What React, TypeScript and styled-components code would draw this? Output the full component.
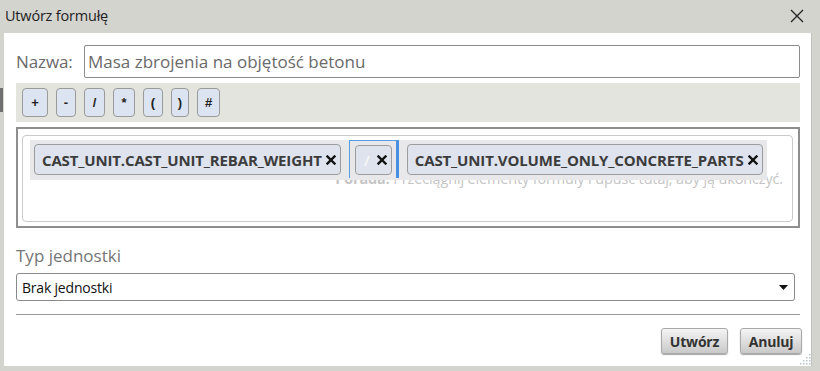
import React from "react";
import styled, { createGlobalStyle } from "styled-components";

const Global = createGlobalStyle`
  html, body { margin: 0; padding: 0; }
  body { background: #d4d4cf; font-family: "Open Sans", "Noto Sans", sans-serif; overflow: hidden; }
`;

const Window = styled.div`
  position: relative;
  width: 820px;
  height: 371px;
  background: #d4d4cf;
  display: flex;
  flex-direction: column;
`;

const TitleBar = styled.div`
  height: 33px;
  display: flex;
  align-items: center;
  justify-content: space-between;
  padding: 0 16px 0 5px;
  box-sizing: border-box;
`;

const Title = styled.span`
  font-size: 14.5px;
  color: #1e1e1e;
  letter-spacing: -0.2px;
  margin-top: -2px;
`;

const CloseIcon = styled.svg`
  width: 14px;
  height: 14px;
  margin-top: -2px;
`;

const SideMark = styled.div`
  position: absolute;
  left: 0;
  top: 88px;
  width: 3px;
  height: 24px;
  background: #6f6f6f;
`;

const Panel = styled.div`
  margin: 0 8px 5px 4px;
  flex: 1;
  background: #fff;
  border-right: 1px solid #c2c2c2;
  padding: 12px 11px 0 12px;
  box-sizing: border-box;
  display: flex;
  flex-direction: column;
  position: relative;
`;

const NameRow = styled.div`
  display: flex;
  align-items: center;
  height: 33px;
`;

const Label = styled.span`
  font-size: 17px;
  color: #6a6a6a;
  width: 68px;
  flex: none;
  letter-spacing: -0.1px;
`;

const NameInput = styled.div`
  flex: 1;
  height: 33px;
  box-sizing: border-box;
  border: 1px solid #8c8c8c;
  border-radius: 2px;
  display: flex;
  align-items: center;
  padding-left: 3px;
  font-size: 17px;
  color: #6a6a6a;
  letter-spacing: 0;
`;

const Toolbar = styled.div`
  margin-top: 5px;
  height: 39px;
  background: #e4e4df;
  display: flex;
  align-items: flex-start;
  padding: 5px 0 0 6px;
  box-sizing: border-box;
  gap: 8px;
`;

const OpButton = styled.div<{ $w: number }>`
  width: ${(p) => p.$w}px;
  height: 29px;
  box-sizing: border-box;
  border: 1px solid #9a9a9a;
  border-radius: 4px;
  background: #dde4f1;
  display: flex;
  align-items: center;
  justify-content: center;
  font-family: "Liberation Sans", Arial, sans-serif;
  font-weight: bold;
  font-size: 13px;
  color: #222;
`;

const DropOuter = styled.div`
  margin-top: 5px;
  height: 101px;
  box-sizing: border-box;
  border: 2px solid #8e8e8e;
  padding: 6px 5px 4px 4px;
`;

const DropInner = styled.div`
  position: relative;
  height: 100%;
  box-sizing: border-box;
  border: 1px solid #cacaca;
  border-radius: 4px;
  padding: 4px 7px;
`;

const Hint = styled.div`
  position: absolute;
  right: 9px;
  top: 33px;
  font-size: 14.4px;
  color: #c4c4c4;
  white-space: nowrap;
  z-index: 0;
  letter-spacing: -0.1px;
`;

const Strip = styled.div`
  position: relative;
  z-index: 1;
  display: inline-flex;
  align-items: flex-start;
  height: 40px;
  box-sizing: border-box;
  background: #e8e8ea;
  padding: 4px 4px 0 4px;
  gap: 8px;
`;

const Token = styled.div`
  height: 31px;
  box-sizing: border-box;
  border: 1px solid #9c9c9c;
  border-radius: 4px;
  background: #dee3ee;
  display: flex;
  align-items: center;
  padding: 0 4px 0 7px;
  gap: 4px;
  font-weight: bold;
  font-size: 15px;
  color: #3c3c3c;
  letter-spacing: -0.15px;
  white-space: nowrap;
`;

const OpToken = styled(Token)`
  padding: 0 4px 0 8px;
  gap: 7px;
  height: 30px;
`;

const Faded = styled.span`
  color: #f4f4f4;
  font-weight: bold;
`;

const Selected = styled.div`
  margin-top: -4px;
  height: 38px;
  box-sizing: border-box;
  border: 1px solid #5b9be0;
  border-right: 3px solid #4a90e2;
  border-bottom: none;
  padding: 4px 4px 0 5px;
  background: #e8e8ea;
`;

const XIcon = styled.svg`
  width: 10px;
  height: 10px;
  flex: none;
`;

const UnitLabel = styled.div`
  margin-top: 17px;
  font-size: 17px;
  color: #757575;
  letter-spacing: 0;
  height: 22px;
  line-height: 22px;
`;

const Select = styled.div`
  margin-top: 6px;
  margin-right: 5px;
  height: 28px;
  box-sizing: border-box;
  border: 1px solid #8a8a8a;
  border-radius: 3px;
  display: flex;
  align-items: center;
  justify-content: space-between;
  padding: 0 6px 0 5px;
  font-size: 14px;
  color: #111;
  letter-spacing: -0.2px;
`;

const Arrow = styled.svg`
  width: 9px;
  height: 5px;
`;

const Divider = styled.div`
  margin-top: 13px;
  height: 1px;
  background: #9a9a9a;
`;

const Footer = styled.div`
  display: flex;
  justify-content: flex-end;
  gap: 12px;
  margin-top: 13px;
  margin-right: -2px;
`;

const ActionButton = styled.div<{ $w: number }>`
  width: ${(p) => p.$w}px;
  height: 26px;
  box-sizing: border-box;
  border: 1px solid #a8a8a8;
  border-radius: 3px;
  background: linear-gradient(#f4f4f4, #c9c9c9);
  box-shadow: 0 1px 1px rgba(0, 0, 0, 0.35);
  display: flex;
  align-items: center;
  justify-content: center;
  font-weight: bold;
  font-size: 14px;
  color: #333;
  letter-spacing: -0.2px;
`;

const Grip = styled.svg`
  position: absolute;
  right: 0;
  bottom: 1px;
  width: 12px;
  height: 12px;
`;

const X = () => (
  <XIcon viewBox="0 0 10 10">
    <path d="M1.5 1.5 L8.5 8.5 M8.5 1.5 L1.5 8.5" stroke="#111" strokeWidth="2.4" strokeLinecap="square" />
  </XIcon>
);

const ops: [string, number][] = [
  ["+", 26],
  ["-", 20],
  ["/", 21],
  ["*", 22],
  ["(", 20],
  [")", 18],
  ["#", 23],
];

export default function App() {
  return (
    <Window>
      <Global />
      <TitleBar>
        <Title>Utwórz formułę</Title>
        <CloseIcon viewBox="0 0 14 14">
          <path d="M1 1 L13 13 M13 1 L1 13" stroke="#222" strokeWidth="1.3" />
        </CloseIcon>
      </TitleBar>
      <SideMark />
      <Panel>
        <NameRow>
          <Label>Nazwa:</Label>
          <NameInput>Masa zbrojenia na objętość betonu</NameInput>
        </NameRow>
        <Toolbar>
          {ops.map(([o, w]) => (
            <OpButton key={o} $w={w}>
              {o}
            </OpButton>
          ))}
        </Toolbar>
        <DropOuter>
          <DropInner>
            <Hint>
              <b>Porada:</b> Przeciągnij elementy formuły i upuść tutaj, aby ją ukończyć.
            </Hint>
            <Strip>
              <Token>
                CAST_UNIT.CAST_UNIT_REBAR_WEIGHT
                <X />
              </Token>
              <Selected>
                <OpToken>
                  <Faded>/</Faded>
                  <X />
                </OpToken>
              </Selected>
              <Token>
                CAST_UNIT.VOLUME_ONLY_CONCRETE_PARTS
                <X />
              </Token>
            </Strip>
          </DropInner>
        </DropOuter>
        <UnitLabel>Typ jednostki</UnitLabel>
        <Select>
          Brak jednostki
          <Arrow viewBox="0 0 9 5">
            <path d="M0 0 L9 0 L4.5 5 Z" fill="#111" />
          </Arrow>
        </Select>
        <Divider />
        <Footer>
          <ActionButton $w={67}>Utwórz</ActionButton>
          <ActionButton $w={62}>Anuluj</ActionButton>
        </Footer>
        <Grip viewBox="0 0 12 12">
          {[
            [10, 2], [10, 5], [7, 5], [10, 8], [7, 8], [4, 8], [10, 11], [7, 11], [4, 11], [1, 11],
          ].map(([x, y], i) => (
            <rect key={i} x={x} y={y - 1} width="1.5" height="1.5" fill="#b8c4d0" />
          ))}
        </Grip>
      </Panel>
    </Window>
  );
}
